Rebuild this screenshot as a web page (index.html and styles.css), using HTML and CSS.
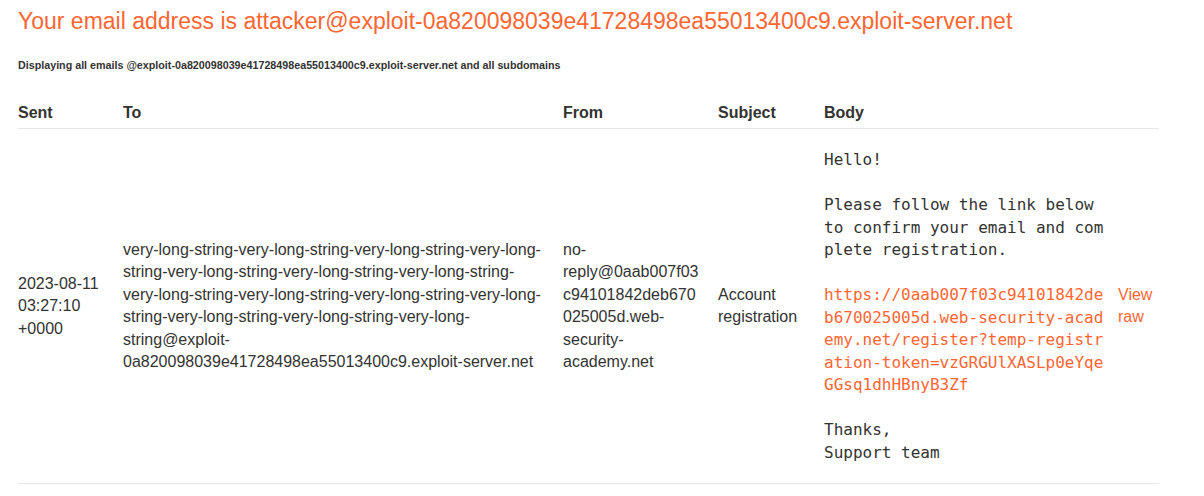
FILE: index.html
```html
<!DOCTYPE html>
<html lang="en">
<head>
<meta charset="utf-8">
<title>Exploit Server - Email client</title>
<link rel="stylesheet" href="styles.css">
</head>
<body>
<div class="page">
  <h1 class="title">Your email address is attacker@exploit-0a820098039e41728498ea55013400c9.exploit-server.net</h1>
  <h4 class="subtitle">Displaying all emails @exploit-0a820098039e41728498ea55013400c9.exploit-server.net and all subdomains</h4>
  <table class="emails">
    <colgroup>
      <col class="c-sent">
      <col class="c-to">
      <col class="c-from">
      <col class="c-subject">
      <col class="c-body">
      <col class="c-raw">
    </colgroup>
    <thead>
      <tr>
        <th>Sent</th>
        <th>To</th>
        <th>From</th>
        <th>Subject</th>
        <th>Body</th>
        <th></th>
      </tr>
    </thead>
    <tbody>
      <tr>
        <td>2023-08-11 03:27:10 +0000</td>
        <td>very-long-string-very-long-string-very-long-string-very-long-string-very-long-string-very-long-string-very-long-string-very-long-string-very-long-string-very-long-string-very-long-string-very-long-string-very-long-string-very-long-string@exploit-0a820098039e41728498ea55013400c9.exploit-server.net</td>
        <td class="from">no-reply@0aab007f03c94101842deb670025005d.web-security-academy.net</td>
        <td>Account registration</td>
        <td class="body-cell"><pre class="mail-body">Hello!

Please follow the link below to confirm your email and complete registration.

<a class="link" href="#">https://0aab007f03c94101842deb670025005d.web-security-academy.net/register?temp-registration-token=vzGRGUlXASLp0eYqeGGsq1dhHBnyB3Zf</a>

Thanks,
Support team</pre></td>
        <td><a class="raw" href="#">View raw</a></td>
      </tr>
    </tbody>
  </table>
</div>
</body>
</html>
```

FILE: styles.css
```css
html, body {
  margin: 0;
  padding: 0;
  background: #ffffff;
}

.page {
  padding: 7px 18px 0 18px;
  font-family: "Liberation Sans", Arial, sans-serif;
  color: #333332;
}

.title {
  margin: 0;
  font-size: 23px;
  font-weight: normal;
  color: #ff6633;
  line-height: 28px;
}

.subtitle {
  margin: 23px 0 0 0;
  font-size: 10.72px;
  font-weight: bold;
  line-height: 14px;
}

.emails {
  margin-top: 26px;
  width: 1141px;
  table-layout: fixed;
  border-collapse: collapse;
  border-spacing: 0;
  font-size: 16px;
  line-height: 22.5px;
}

.c-sent { width: 105px; }
.c-to { width: 440px; }
.c-from { width: 155px; }
.c-subject { width: 106px; }
.c-body { width: 294px; }
.c-raw { width: 41px; }

.emails th,
.emails td {
  padding: 4px 15px 4px 0;
  text-align: left;
  vertical-align: middle;
  border-bottom: 1px solid #e6e6e6;
  overflow-wrap: anywhere;
}

.emails th {
  font-weight: bold;
  line-height: 22.4px;
}

.emails th:last-child,
.emails td:last-child {
  padding-right: 0;
}

.emails td.body-cell {
  padding-right: 10px;
}

.mail-body {
  margin: 16px 0 15px 0;
  width: calc(29ch + 0.5px);
  font-family: "DejaVu Sans Mono", monospace;
  font-size: 16px;
  line-height: 22.5px;
  white-space: pre-wrap;
  word-break: break-all;
  color: #333332;
}

.link,
.raw {
  color: #ff6633;
  text-decoration: none;
}
```
